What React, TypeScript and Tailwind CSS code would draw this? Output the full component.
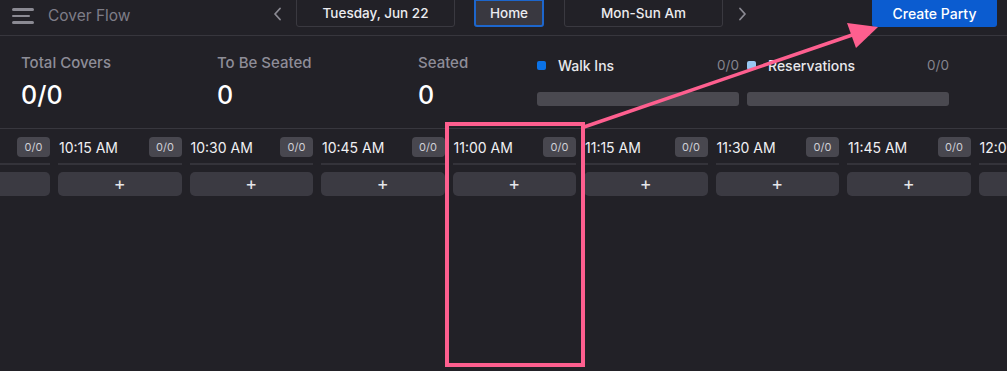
import React from 'react';

const times = ['10:00 AM', '10:15 AM', '10:30 AM', '10:45 AM', '11:00 AM', '11:15 AM', '11:30 AM', '11:45 AM', '12:00 PM'];

const Chevron = ({ dir }: { dir: 'left' | 'right' }) => (
  <svg width="9" height="14" viewBox="0 0 9 14" fill="none">
    <path
      d={dir === 'left' ? 'M7 1.5 L2 7 L7 12.5' : 'M2 1.5 L7 7 L2 12.5'}
      stroke="#8b8a93"
      strokeWidth="1.8"
      strokeLinecap="round"
      strokeLinejoin="round"
    />
  </svg>
);

const Stat = ({ label, value, width }: { label: string; value: string; width: string }) => (
  <div className={`${width} shrink-0 flex flex-col`}>
    <span className="text-[15px] leading-[20px] font-medium text-[#8e8d98]">{label}</span>
    <span className="mt-[8px] text-[25px] leading-[28px] font-medium text-white">{value}</span>
  </div>
);

const Legend = ({ label, color }: { label: string; color: string }) => (
  <div className="w-[202px] shrink-0 flex flex-col">
    <div className="flex items-center h-[20px]">
      <span className={`w-[9px] h-[9px] rounded-[2px] ${color}`} />
      <span className="ml-[12px] text-[14px] font-medium text-[#e8e8ec]">{label}</span>
      <span className="ml-auto text-[13.5px] text-[#85848e]">0/0</span>
    </div>
    <div className="mt-[17px] h-[14px] rounded-[3px] bg-[#4a4950]" />
  </div>
);

export default function App() {
  return (
    <div className="relative w-[1007px] h-[371px] overflow-hidden bg-[#222127] font-['Inter',sans-serif]">
      {/* Top bar */}
      <div className="flex items-start h-[36px] border-b border-[#37363d]">
        <div className="w-[266px] shrink-0 flex items-start">
          <div className="ml-[12px] mt-[8px] flex flex-col gap-[4px]">
            <span className="block w-[22px] h-[2.5px] rounded-full bg-[#8b8a93]" />
            <span className="block w-[18px] h-[2.5px] rounded-full bg-[#8b8a93]" />
            <span className="block w-[22px] h-[2.5px] rounded-full bg-[#8b8a93]" />
          </div>
          <span className="ml-[14px] mt-[5px] text-[15.5px] leading-[22px] text-[#7e7d87]">Cover Flow</span>
        </div>
        <div className="w-[22px] h-[27px] flex items-center justify-center">
          <Chevron dir="left" />
        </div>
        <div className="ml-[8px] -mt-px w-[159px] h-[28px] flex items-center justify-center border border-[#3a3940] rounded-b-[3px] text-[13.5px] font-medium text-[#ececf0]">
          Tuesday, Jun 22
        </div>
        <div className="ml-[19px] -mt-px w-[70px] h-[28px] flex items-center justify-center border-2 border-[#1d66cc] rounded-b-[3px] bg-[#393840] text-[13.5px] font-medium text-[#ececf0]">
          Home
        </div>
        <div className="ml-[20px] -mt-px w-[159px] h-[28px] flex items-center justify-center border border-[#3a3940] rounded-b-[3px] text-[13.5px] font-medium text-[#ececf0]">
          Mon-Sun Am
        </div>
        <div className="ml-[8px] w-[22px] h-[27px] flex items-center justify-center">
          <Chevron dir="right" />
        </div>
        <button className="ml-auto mr-[10px] w-[125px] h-[27px] rounded-b-[3px] bg-[#0b5cd0] text-[14px] font-medium text-white">
          Create Party
        </button>
      </div>

      {/* Stats */}
      <div className="flex items-start h-[93px] pl-[21px] pt-[17px] border-b border-[#38373e]">
        <Stat label="Total Covers" value="0/0" width="w-[196px]" />
        <Stat label="To Be Seated" value="0" width="w-[201px]" />
        <Stat label="Seated" value="0" width="w-[119px]" />
        <div className="flex gap-[8px] pt-[2px]">
          <Legend label="Walk Ins" color="bg-[#0b72e6]" />
          <Legend label="Reservations" color="bg-[#98c8f2]" />
        </div>
      </div>

      {/* Time slots */}
      <div className="flex gap-[8px] -ml-[73.5px]">
        {times.map((t) => (
          <div key={t} className="w-[123.5px] shrink-0 flex flex-col pt-[8px]">
            <div className="flex items-center justify-between h-[20px]">
              <span className="pl-px text-[14px] text-[#f0f0f3] whitespace-nowrap">{t}</span>
              <span className="w-[33px] h-[20px] rounded-[4px] bg-[#48474f] flex items-center justify-center text-[11px] text-[#cfcfd6]">
                0/0
              </span>
            </div>
            <div className="mt-[6px] h-[2px] bg-[#34333a]" />
            <div className="mt-[7px] h-[24px] rounded-[5px] bg-[#3b3a42] flex items-center justify-center text-[18px] leading-none text-[#e6e6ea]">
              +
            </div>
          </div>
        ))}
      </div>

      {/* Annotation overlay */}
      <svg className="absolute inset-0 pointer-events-none" width="1007" height="371" viewBox="0 0 1007 371">
        <rect x="447" y="124" width="136" height="241" fill="none" stroke="#fe5f8f" strokeWidth="4" />
        <line x1="584" y1="127" x2="858" y2="33" stroke="#fe5f8f" strokeWidth="3.5" />
        <polygon points="878,27 847,23 856,48" fill="#fe5f8f" />
      </svg>
    </div>
  );
}
